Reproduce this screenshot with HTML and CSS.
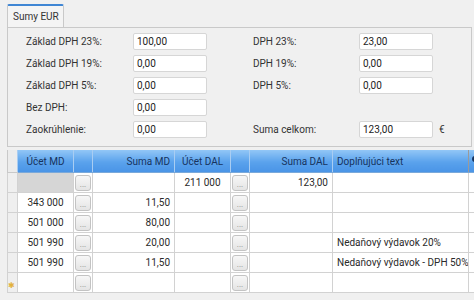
FILE: index.html
```html
<!DOCTYPE html>
<html>
<head>
  <title>Sumy EUR</title>
  <link rel="stylesheet" href="styles.css">
</head>
<body>
  <div class="window">
    <!-- Tab strip -->
    <div class="tabs">
      <div class="tab">Sumy EUR</div>
    </div>

    <!-- Totals panel -->
    <div class="panel">
      <div class="form">
        <label>Základ DPH 23%:</label>
        <input type="text" value="100,00">
        <span></span>
        <label>DPH 23%:</label>
        <input type="text" value="23,00">
        <span></span>

        <label>Základ DPH 19%:</label>
        <input type="text" value="0,00">
        <span></span>
        <label>DPH 19%:</label>
        <input type="text" value="0,00">
        <span></span>

        <label>Základ DPH 5%:</label>
        <input type="text" value="0,00">
        <span></span>
        <label>DPH 5%:</label>
        <input type="text" value="0,00">
        <span></span>

        <label>Bez DPH:</label>
        <input type="text" value="0,00">
        <span></span>
        <span></span>
        <span></span>
        <span></span>

        <label>Zaokrúhlenie:</label>
        <input type="text" value="0,00">
        <span></span>
        <label>Suma celkom:</label>
        <input type="text" value="123,00">
        <span class="currency">€</span>
      </div>
    </div>

    <!-- Accounting grid -->
    <div class="grid">
      <table>
        <colgroup>
          <col class="c-row">
          <col class="c-acc">
          <col class="c-btn">
          <col class="c-sum">
          <col class="c-acc">
          <col class="c-btn">
          <col class="c-sum2">
          <col class="c-text">
          <col class="c-last">
        </colgroup>
        <thead>
          <tr>
            <th class="row-head"></th>
            <th class="center">Účet MD</th>
            <th></th>
            <th class="right">Suma MD</th>
            <th class="center">Účet DAL</th>
            <th></th>
            <th class="right">Suma DAL</th>
            <th>Doplňujúci text</th>
            <th class="last"><span class="dot"></span></th>
          </tr>
        </thead>
        <tbody>
          <tr>
            <td class="row-head"></td>
            <td class="center disabled"></td>
            <td class="btn-cell"><button>...</button></td>
            <td class="right"></td>
            <td class="center">211 000</td>
            <td class="btn-cell"><button>...</button></td>
            <td class="right">123,00</td>
            <td></td>
            <td></td>
          </tr>
          <tr>
            <td class="row-head"></td>
            <td class="center">343 000</td>
            <td class="btn-cell"><button>...</button></td>
            <td class="right">11,50</td>
            <td class="center"></td>
            <td class="btn-cell"><button>...</button></td>
            <td class="right"></td>
            <td></td>
            <td></td>
          </tr>
          <tr>
            <td class="row-head"></td>
            <td class="center">501 000</td>
            <td class="btn-cell"><button>...</button></td>
            <td class="right">80,00</td>
            <td class="center"></td>
            <td class="btn-cell"><button>...</button></td>
            <td class="right"></td>
            <td></td>
            <td></td>
          </tr>
          <tr>
            <td class="row-head"></td>
            <td class="center">501 990</td>
            <td class="btn-cell"><button>...</button></td>
            <td class="right">20,00</td>
            <td class="center"></td>
            <td class="btn-cell"><button>...</button></td>
            <td class="right"></td>
            <td>Nedaňový výdavok 20%</td>
            <td></td>
          </tr>
          <tr>
            <td class="row-head"></td>
            <td class="center">501 990</td>
            <td class="btn-cell"><button>...</button></td>
            <td class="right">11,50</td>
            <td class="center"></td>
            <td class="btn-cell"><button>...</button></td>
            <td class="right"></td>
            <td>Nedaňový výdavok - DPH 50%</td>
            <td></td>
          </tr>
          <tr>
            <td class="row-head"><span class="star">✱</span></td>
            <td class="center"></td>
            <td class="btn-cell"><button>...</button></td>
            <td class="right"></td>
            <td class="center"></td>
            <td class="btn-cell"><button>...</button></td>
            <td class="right"></td>
            <td></td>
            <td></td>
          </tr>
        </tbody>
      </table>
    </div>
  </div>
</body>
</html>
```

FILE: styles.css
```css
body {
  font-family: Roboto, sans-serif;
  font-size: 10px;
  color: #2a2a2a;
  background-color: #f0f0f0;
  margin: 0;
  width: 474px;
  height: 300px;
  overflow: hidden;
}

.window {
  padding: 4px 2px 0 7px;
}

.tabs {
  display: flex;
  height: 23px;
}

.tab {
  width: 57px;
  border-top: 2px solid #3f86d4;
  border-left: 1px solid #c9c9c9;
  border-right: 1px solid #c9c9c9;
  border-radius: 2px 2px 0 0;
  background-color: #f4f4f4;
  padding: 5px 0 0 5px;
  box-sizing: border-box;
  color: #333;
  white-space: nowrap;
}

.panel {
  border: 1px solid #c9c9c9;
  background-color: #f0f0f0;
  padding: 5px 0 8px 18px;
  margin-bottom: 3px;
}

.form {
  display: grid;
  grid-template-columns: 107px 74px 46px 106px 74px auto;
  grid-auto-rows: 17px;
  row-gap: 5px;
  align-items: center;
}

.form label {
  color: #333;
}

.form input {
  height: 17px;
  width: 74px;
  box-sizing: border-box;
  border: 1px solid #d6d6d6;
  border-radius: 2px;
  background-color: #fff;
  font-family: inherit;
  font-size: 10px;
  color: #222;
  padding: 0 3px;
  margin: 0;
}

.currency {
  padding-left: 6px;
  color: #333;
}

.grid {
  overflow: hidden;
  width: 467px;
}

table {
  border-collapse: collapse;
  table-layout: fixed;
  width: 480px;
}

.c-row { width: 10px; }
.c-acc { width: 56px; }
.c-btn { width: 19px; }
.c-sum { width: 82px; }
.c-sum2 { width: 83px; }
.c-text { width: 136px; }
.c-last { width: 19px; }

th {
  height: 22px;
  padding: 0 4px;
  font-weight: normal;
  text-align: left;
  color: #17335e;
  background: linear-gradient(#92c6f6, #5aa2ec 55%, #4a94e6);
  border-left: 1px solid #a9cdf2;
  border-bottom: 1px solid #7aa9da;
  white-space: nowrap;
  overflow: hidden;
}

th.row-head {
  background: #ececec;
  border-left: 1px solid #c9c9c9;
  border-bottom: 1px solid #c9c9c9;
}

th.last {
  border-left: 1px solid #9a9a9a;
  padding: 0 0 0 3px;
}

.dot {
  display: block;
  width: 6px;
  height: 6px;
  border-radius: 50%;
  background-color: #17335e;
  margin-top: -4px;
}

tbody tr {
  height: 20px;
}

td {
  padding: 0 4px;
  line-height: 18px;
  background-color: #fff;
  border: 1px solid #d2d2d2;
  white-space: nowrap;
  overflow: hidden;
}

td.row-head {
  background-color: #efefef;
  padding: 0;
  position: relative;
}

.center { text-align: center; }
.right { text-align: right; }

td.disabled {
  background-color: #d6d6d6;
}

td.btn-cell {
  padding: 0 1px;
}

td.btn-cell button {
  display: block;
  width: 16px;
  height: 16px;
  margin: 0 auto;
  padding: 4px 0 0;
  border: 1px solid #c3c3c3;
  border-radius: 3px;
  background: linear-gradient(#f7f7f7, #e4e4e4);
  font-family: inherit;
  font-size: 8px;
  color: #888;
  line-height: 8px;
}

.star {
  position: absolute;
  left: 0;
  top: 4px;
  font-size: 8px;
  color: #e2b13c;
}
```
